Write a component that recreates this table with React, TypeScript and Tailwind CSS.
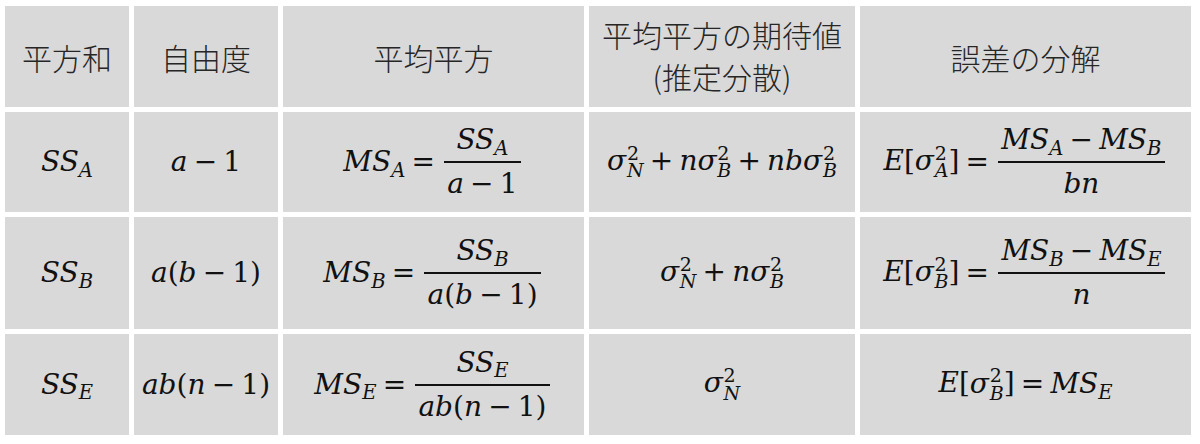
import type { ReactNode } from "react";

const math = "font-['DejaVu_Serif',serif] text-[28px] text-[#111] leading-none";

function I({ children }: { children: ReactNode }) {
  return <span className="italic">{children}</span>;
}

function Sub({ children }: { children: ReactNode }) {
  return <span className="relative top-[0.3em] text-[0.7em] italic">{children}</span>;
}

function SupSub({ sub }: { sub: string }) {
  return (
    <span className="inline-flex flex-col items-start align-[0.55em] text-[0.68em] leading-[0.9] ml-[0.04em]">
      <span>2</span>
      <span className="italic">{sub}</span>
    </span>
  );
}

function Op({ children }: { children: ReactNode }) {
  return <span className="mx-[0.22em]">{children}</span>;
}

function Frac({ top, bottom }: { top: ReactNode; bottom: ReactNode }) {
  return (
    <span className="inline-flex flex-col items-center mx-[0.1em]">
      <span className="px-[0.12em] pb-[7px]">{top}</span>
      <span className="self-stretch border-t-[2px] border-[#111]" />
      <span className="px-[0.12em] pt-[7px]">{bottom}</span>
    </span>
  );
}

const SS = (s: string) => (
  <span className="whitespace-nowrap">
    <I>SS</I>
    <Sub>{s}</Sub>
  </span>
);
const MS = (s: string) => (
  <span className="whitespace-nowrap">
    <I>MS</I>
    <Sub>{s}</Sub>
  </span>
);
const sig = (s: string) => (
  <span className="whitespace-nowrap">
    <I>σ</I>
    <SupSub sub={s} />
  </span>
);

function Cell({ children, head }: { children: ReactNode; head?: boolean }) {
  return (
    <div
      className={
        "bg-[#d9d9d9] flex items-center justify-center text-center " +
        (head
          ? "font-['Noto_Sans_CJK_JP','Noto_Sans',sans-serif] font-light text-[30px] leading-[42px] text-[#262626]"
          : math)
      }
    >
      {children}
    </div>
  );
}

export default function App() {
  return (
    <div className="w-[1200px] h-[444px] bg-white pl-[5px] pt-[6px]">
      <div className="grid grid-cols-[124px_144px_301px_266px_331px] grid-rows-[101px_100px_112px_101px] gap-[5px]">
        <Cell head>平方和</Cell>
        <Cell head>自由度</Cell>
        <Cell head>平均平方</Cell>
        <Cell head>
          <div className="-mt-[4px]">
            平均平方の期待値
            <br />
            (推定分散)
          </div>
        </Cell>
        <Cell head>誤差の分解</Cell>

        {/* row A */}
        <Cell>{SS("A")}</Cell>
        <Cell>
          <span>
            <I>a</I>
            <Op>−</Op>1
          </span>
        </Cell>
        <Cell>
          <span className="inline-flex items-center">
            {MS("A")}
            <Op>=</Op>
            <Frac
              top={SS("A")}
              bottom={
                <span>
                  <I>a</I>
                  <Op>−</Op>1
                </span>
              }
            />
          </span>
        </Cell>
        <Cell>
          <span className="whitespace-nowrap">
            {sig("N")}
            <Op>+</Op>
            <I>n</I>
            {sig("B")}
            <Op>+</Op>
            <I>nb</I>
            {sig("B")}
          </span>
        </Cell>
        <Cell>
          <span className="inline-flex items-center">
            <span className="whitespace-nowrap">
              <I>E</I>[{sig("A")}]
            </span>
            <Op>=</Op>
            <Frac
              top={
                <span>
                  {MS("A")}
                  <Op>−</Op>
                  {MS("B")}
                </span>
              }
              bottom={<I>bn</I>}
            />
          </span>
        </Cell>

        {/* row B */}
        <Cell>{SS("B")}</Cell>
        <Cell>
          <span>
            <I>a</I>(<I>b</I>
            <Op>−</Op>1)
          </span>
        </Cell>
        <Cell>
          <span className="inline-flex items-center">
            {MS("B")}
            <Op>=</Op>
            <Frac
              top={SS("B")}
              bottom={
                <span>
                  <I>a</I>(<I>b</I>
                  <Op>−</Op>1)
                </span>
              }
            />
          </span>
        </Cell>
        <Cell>
          <span className="whitespace-nowrap">
            {sig("N")}
            <Op>+</Op>
            <I>n</I>
            {sig("B")}
          </span>
        </Cell>
        <Cell>
          <span className="inline-flex items-center">
            <span className="whitespace-nowrap">
              <I>E</I>[{sig("B")}]
            </span>
            <Op>=</Op>
            <Frac
              top={
                <span>
                  {MS("B")}
                  <Op>−</Op>
                  {MS("E")}
                </span>
              }
              bottom={<I>n</I>}
            />
          </span>
        </Cell>

        {/* row E */}
        <Cell>{SS("E")}</Cell>
        <Cell>
          <span>
            <I>ab</I>(<I>n</I>
            <Op>−</Op>1)
          </span>
        </Cell>
        <Cell>
          <span className="inline-flex items-center">
            {MS("E")}
            <Op>=</Op>
            <Frac
              top={SS("E")}
              bottom={
                <span>
                  <I>ab</I>(<I>n</I>
                  <Op>−</Op>1)
                </span>
              }
            />
          </span>
        </Cell>
        <Cell>{sig("N")}</Cell>
        <Cell>
          <span className="whitespace-nowrap">
            <I>E</I>[{sig("B")}]<Op>=</Op>
            {MS("E")}
          </span>
        </Cell>
      </div>
    </div>
  );
}
